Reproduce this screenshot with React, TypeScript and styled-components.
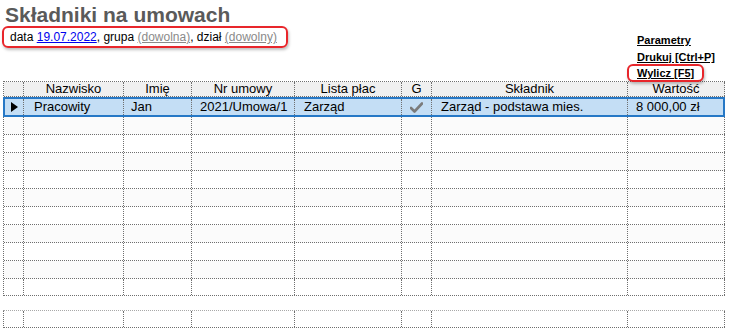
import React from "react";
import styled, { createGlobalStyle } from "styled-components";

const Global = createGlobalStyle`
  html, body { margin: 0; padding: 0; background: #ffffff; }
  body { font-family: "Liberation Sans", Arial, sans-serif; color: #000; }
`;

const COLS = "20px 100px 68px 103px 107px 30px 196px 97px";
const DOT = "1px dotted #6f6f6f";

const Page = styled.div`
  width: 729px;
  height: 331px;
  overflow: hidden;
`;

const Top = styled.div`
  display: grid;
  grid-template-columns: 1fr 92px;
  height: 81px;
`;

const LeftHead = styled.div`
  display: flex;
  flex-direction: column;
  align-items: flex-start;
  padding: 3px 0 0 2px;
`;

const Title = styled.div`
  font-size: 21px;
  line-height: 24px;
  font-weight: bold;
  color: #5a5a5a;
  padding-left: 3px;
`;

const Filter = styled.div`
  margin-top: -1px;
  border: 2px solid #e8262b;
  border-radius: 6px;
  box-shadow: 1px 2px 3px rgba(0, 0, 0, 0.25);
  height: 22px;
  box-sizing: border-box;
  display: flex;
  align-items: center;
  padding: 0 9px 0 6px;
  font-size: 12px;
  white-space: pre;
`;

const LinkDate = styled.span`
  color: #0000ee;
  text-decoration: underline;
`;

const LinkGray = styled.span`
  color: #8a8a8a;
  text-decoration: underline;
`;

const Links = styled.div`
  display: flex;
  flex-direction: column;
  align-items: flex-start;
  padding-top: 34px;
  gap: 4px;
`;

const Action = styled.div<{ $boxed?: boolean }>`
  font-size: 11px;
  line-height: 13px;
  font-weight: bold;
  text-decoration: underline;
  color: #000;
  box-sizing: border-box;
  ${(p) =>
    p.$boxed
      ? `
    margin-left: -10px;
    margin-top: -4px;
    padding: 1px 8px 0 8px;
    border: 2px solid #e8262b;
    border-radius: 6px;
    box-shadow: 1px 2px 3px rgba(0,0,0,0.25);
    background: #fff;
    position: relative;
    z-index: 2;
  `
      : ""}
`;

const Grid = styled.div`
  margin-left: 3px;
  width: 722px;
  box-sizing: border-box;
  border-left: ${DOT};
  border-top: ${DOT};
  font-size: 13px;
`;

const Row = styled.div<{ $h: number; $bg?: string; $selected?: boolean }>`
  display: grid;
  grid-template-columns: ${COLS};
  height: ${(p) => p.$h}px;
  box-sizing: border-box;
  border-bottom: ${DOT};
  background: ${(p) => p.$bg || "#fff"};
  position: relative;
  ${(p) =>
    p.$selected
      ? `
    border-bottom: 2px solid #2678c6;
    border-top: 2px solid #2678c6;
    margin-left: -1px;
    width: 722px;
    border-left: 2px solid #2678c6;
    border-right: 2px solid #2678c6;
    grid-template-columns: 19px 100px 68px 103px 107px 30px 196px 95px;
  `
      : ""}
`;

const Cell = styled.div<{ $center?: boolean; $pl?: number; $last?: boolean }>`
  box-sizing: border-box;
  border-right: ${(p) => (p.$last ? "none" : DOT)};
  display: flex;
  align-items: center;
  justify-content: ${(p) => (p.$center ? "center" : "flex-start")};
  padding-left: ${(p) => (p.$center ? 0 : p.$pl ?? 8)}px;
  white-space: nowrap;
  overflow: hidden;
  line-height: 14px;
`;

const LastCellWrap = styled(Cell)`
  border-right: ${DOT};
`;

const Gap = styled.div`
  height: 14px;
  margin-left: -1px;
  width: 722px;
  background: #fff;
`;

const Footer = styled.div`
  display: grid;
  grid-template-columns: ${COLS};
  height: 18px;
  box-sizing: border-box;
  border-top: 1px dotted #a8a8a8;
  border-bottom: ${DOT};
  margin-left: -1px;
  border-left: ${DOT};
  width: 722px;
`;

const Arrow = () => (
  <svg width="7" height="10" viewBox="0 0 7 10">
    <polygon points="0,0 7,5 0,10" fill="#000" />
  </svg>
);

const Check = () => (
  <svg width="13" height="11" viewBox="0 0 13 11">
    <path d="M1 6 L4.5 9.5 L12 1.5" fill="none" stroke="#7b7b7b" strokeWidth="2.6" strokeLinecap="round" strokeLinejoin="round" />
  </svg>
);

const headers = ["Nazwisko", "Imię", "Nr umowy", "Lista płac", "G", "Składnik", "Wartość"];

export default function App() {
  const empty = Array.from({ length: 10 }, (_, i) => i);
  return (
    <Page>
      <Global />
      <Top>
        <LeftHead>
          <Title>Składniki na umowach</Title>
          <Filter>
            {"data "}
            <LinkDate>19.07.2022</LinkDate>
            {", grupa "}
            <LinkGray>(dowolna)</LinkGray>
            {", dział "}
            <LinkGray>(dowolny)</LinkGray>
          </Filter>
        </LeftHead>
        <Links>
          <Action>Parametry</Action>
          <Action>Drukuj [Ctrl+P]</Action>
          <Action $boxed>Wylicz [F5]</Action>
        </Links>
      </Top>
      <Grid>
        <Row $h={15} $bg="#f0f0f0">
          <Cell />
          {headers.map((h) => (
            <Cell key={h} $center>
              {h}
            </Cell>
          ))}
        </Row>
        <Row $h={20} $bg="#c4def5" $selected>
          <Cell $center>
            <Arrow />
          </Cell>
          <Cell $pl={10}>Pracowity</Cell>
          <Cell $pl={7}>Jan</Cell>
          <Cell $pl={8}>2021/Umowa/1</Cell>
          <Cell $pl={9}>Zarząd</Cell>
          <Cell $center>
            <Check />
          </Cell>
          <Cell $pl={9}>Zarząd - podstawa mies.</Cell>
          <Cell $pl={8} $last>8 000,00 zł</Cell>
        </Row>
        {empty.map((i) => (
          <Row key={i} $h={i === 9 ? 17 : 18} $bg={i % 2 === 0 ? "#fbfbfb" : "#ffffff"}>
            {Array.from({ length: 8 }, (_, c) => (
              <Cell key={c} />
            ))}
          </Row>
        ))}
        <Gap />
        <Footer>
          {Array.from({ length: 8 }, (_, c) =>
            c === 7 ? <LastCellWrap key={c} /> : <Cell key={c} />
          )}
        </Footer>
      </Grid>
    </Page>
  );
}
